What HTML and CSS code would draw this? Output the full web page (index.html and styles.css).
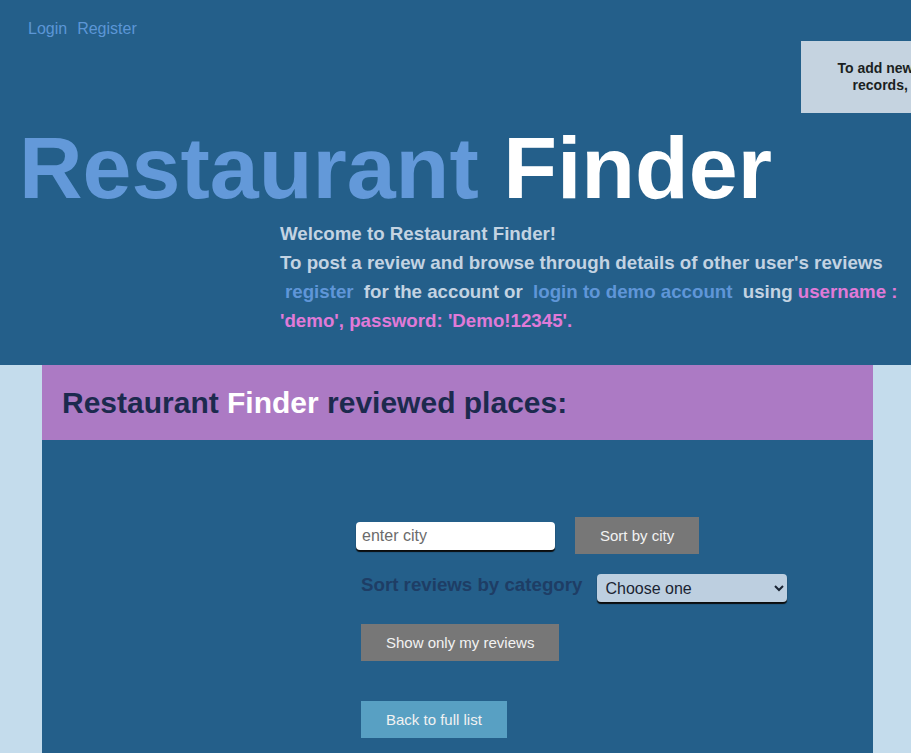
FILE: index.html
```html
<!DOCTYPE html>
<html lang="en">
<head>
<meta charset="utf-8">
<title>Restaurant Finder</title>
<link rel="stylesheet" href="styles.css">
</head>
<body>
<header class="top">
  <nav class="nav">
    <a class="nav-link" href="#">Login</a>
    <a class="nav-link" href="#">Register</a>
  </nav>
  <div class="notice">To add new reviews or edit<br>records, please log in.</div>
  <h1 class="title"><span class="title-blue">Restaurant</span> Finder</h1>
  <div class="welcome">
    <p class="welcome-line">Welcome to Restaurant Finder!</p>
    <p class="welcome-line">To post a review and browse through details of other user's reviews <a class="inline-link" href="#">register</a> for the account or <a class="inline-link" href="#">login to demo account</a> using <span class="cred">username : 'demo', password: 'Demo!12345'.</span></p>
  </div>
</header>
<main class="page">
  <section class="panel">
    <div class="panel-head">
      <h2 class="panel-title">Restaurant <span class="panel-title-white">Finder</span> reviewed places:</h2>
    </div>
    <div class="controls">
      <div class="row row-city">
        <input class="city-input" type="text" placeholder="enter city">
        <button class="btn btn-grey" type="button">Sort by city</button>
      </div>
      <div class="row row-cat">
        <label class="cat-label" for="cat">Sort reviews by category</label>
        <select class="cat-select" id="cat">
          <option>Choose one</option>
        </select>
      </div>
      <div class="row row-mine">
        <button class="btn btn-grey" type="button">Show only my reviews</button>
      </div>
      <div class="row row-back">
        <button class="btn btn-light" type="button">Back to full list</button>
      </div>
    </div>
  </section>
</main>
</body>
</html>
```
FILE: styles.css
```css
html, body {
  margin: 0;
  padding: 0;
  overflow: hidden;
}

body {
  font-family: "Liberation Sans", Arial, Helvetica, sans-serif;
  background: #c4dcec;
  height: 753px;
}

.top {
  position: relative;
  overflow: hidden;
  background: #245f8a;
  padding: 19px 0 30px 0;
}

.nav {
  display: flex;
  gap: 10px;
  padding-left: 28px;
  height: 20px;
  align-items: center;
}

.nav-link {
  color: #5c96d6;
  text-decoration: none;
  font-size: 16px;
  line-height: 20px;
}

.notice {
  position: absolute;
  left: 801px;
  top: 41px;
  width: 251px;
  height: 72px;
  box-sizing: border-box;
  background: #c5d3e0;
  color: #1b1f22;
  font-weight: bold;
  font-size: 14px;
  line-height: 17px;
  display: flex;
  align-items: center;
  justify-content: center;
  text-align: center;
}

.title {
  margin: 85px 0 0 19px;
  font-size: 88px;
  line-height: 88px;
  font-weight: bold;
  color: #ffffff;
  white-space: nowrap;
}

.title-blue {
  color: #6399d9;
}

.welcome {
  margin: 7px 0 0 280px;
  color: #c3d3e2;
  font-weight: bold;
  font-size: 18.72px;
  line-height: 29px;
}

.welcome-line {
  margin: 0;
}

.inline-link {
  color: #5f96d8;
  text-decoration: none;
  padding: 0 5px;
}

.cred {
  color: #e07ad8;
}

.page {
  display: block;
}

.panel {
  margin-left: 42px;
  width: 831px;
  background: #245f8a;
  height: 388px;
}

.panel-head {
  background: #ac7ac4;
  height: 75px;
  display: flex;
  align-items: center;
  padding-left: 20px;
}

.panel-title {
  margin: 0;
  font-size: 30px;
  font-weight: bold;
  color: #1c2a4e;
}

.panel-title-white {
  color: #ffffff;
}

.controls {
  padding: 77px 0 0 319px;
}

.row {
  display: flex;
  align-items: center;
}

.row-city {
  gap: 20px;
}

.row-cat {
  margin-top: 20px;
  gap: 15px;
}

.row-mine {
  margin-top: 22px;
}

.row-back {
  margin-top: 40px;
}

.city-input {
  margin-left: -5px;
  width: 199px;
  height: 28px;
  box-sizing: border-box;
  border: none;
  border-radius: 4px;
  box-shadow: 0 2px 1px #0c0c0c;
  padding: 0 6px;
  font-family: "Liberation Sans", Arial, sans-serif;
  font-size: 16px;
  background: #ffffff;
  outline: none;
}

.city-input::placeholder {
  color: #6b6b6b;
}

.btn {
  border: none;
  border-radius: 0;
  font-family: "Liberation Sans", Arial, sans-serif;
  font-size: 15px;
  line-height: 17px;
  padding: 10px 25px;
  color: #f2f2f2;
  cursor: pointer;
}

.btn-grey {
  background: #777777;
}

.btn-light {
  background: #58a0c3;
}

.cat-label {
  font-weight: bold;
  font-size: 18.72px;
  color: #1e3d65;
  margin-top: -6px;
}

.cat-select {
  width: 190px;
  height: 28px;
  border: none;
  border-radius: 4px;
  box-shadow: 0 2px 1px #0c0c0c;
  background-color: #bdcfe0;
  color: #1a2433;
  font-family: "Liberation Sans", Arial, sans-serif;
  font-size: 16px;
  padding: 0 4px;
}
```
